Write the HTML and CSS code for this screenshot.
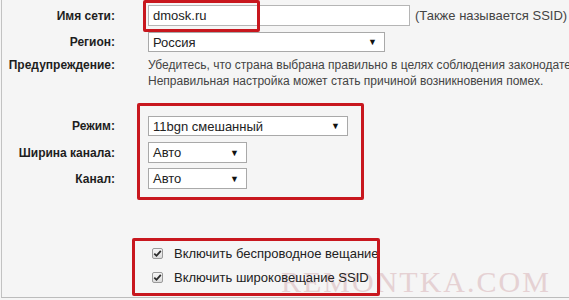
FILE: index.html
```
<!DOCTYPE html>
<html lang="ru">
<head>
<meta charset="utf-8">
<link rel="stylesheet" href="styles.css">
</head>
<body>
<div class="frame">
  <div class="watermark">REMONTKA.COM</div>

  <div class="row row-name">
    <div class="label">Имя сети:</div>
    <div class="ctrl">
      <div class="input">dmosk.ru</div>
      <span class="hint">(Также называется SSID)</span>
    </div>
  </div>

  <div class="row row-region">
    <div class="label">Регион:</div>
    <div class="ctrl">
      <div class="select w-region"><span>Россия</span><span class="arrow">▼</span></div>
    </div>
  </div>

  <div class="row row-warn">
    <div class="label">Предупреждение:</div>
    <div class="warn">Убедитесь, что страна выбрана правильно в целях соблюдения законодательства.<br>Неправильная настройка может стать причиной возникновения помех.</div>
  </div>

  <div class="row row-mode">
    <div class="label">Режим:</div>
    <div class="ctrl">
      <div class="select w-mode"><span>11bgn смешанный</span><span class="arrow">▼</span></div>
    </div>
  </div>

  <div class="row row-width">
    <div class="label">Ширина канала:</div>
    <div class="ctrl">
      <div class="select w-small"><span>Авто</span><span class="arrow">▼</span></div>
    </div>
  </div>

  <div class="row row-chan">
    <div class="label">Канал:</div>
    <div class="ctrl">
      <div class="select w-small"><span>Авто</span><span class="arrow">▼</span></div>
    </div>
  </div>

  <div class="checks">
    <label class="check"><span class="box"><svg viewBox="0 0 11 11" width="11" height="11"><path d="M2.3 5.6 L4.5 7.8 L8.8 2.9" fill="none" stroke="#2b2b2b" stroke-width="1.8"/></svg></span>Включить беспроводное вещание</label>
    <label class="check"><span class="box"><svg viewBox="0 0 11 11" width="11" height="11"><path d="M2.3 5.6 L4.5 7.8 L8.8 2.9" fill="none" stroke="#2b2b2b" stroke-width="1.8"/></svg></span>Включить широковещание SSID</label>
  </div>

  <div class="mark mark-name"></div>
  <div class="mark mark-mode"></div>
  <div class="mark mark-checks"></div>
</div>
</body>
</html>
```

FILE: styles.css
```
html, body {
  margin: 0;
  padding: 0;
  background: #f5f5f5;
  overflow: hidden;
}

body {
  font-family: "Liberation Sans", Arial, sans-serif;
  font-size: 13px;
  color: #333;
  width: 569px;
  height: 300px;
}

.frame {
  position: relative;
  box-sizing: border-box;
  height: 298px;
  margin-left: 1px;
  border-left: 1px solid #c2c2c2;
  border-bottom: 1px solid #bcbcbc;
  padding-top: 5px;
  overflow: hidden;
}

.row {
  display: grid;
  grid-template-columns: 113px auto;
  column-gap: 33px;
  align-items: center;
  white-space: nowrap;
  position: relative;
  z-index: 1;
}

.label {
  text-align: right;
  font-weight: bold;
  font-size: 12px;
  color: #1e1e1e;
}

.ctrl {
  display: flex;
  align-items: center;
}

.input {
  box-sizing: border-box;
  width: 262px;
  height: 21px;
  background: #fff;
  border: 1px solid #b5b5b5;
  padding: 0 4px;
  line-height: 19px;
  font-size: 13px;
  color: #222;
}

.hint {
  margin-left: 5px;
  color: #444;
}

.select {
  box-sizing: border-box;
  height: 20px;
  background: #fff;
  border: 1px solid #a9a9a9;
  display: flex;
  align-items: center;
  justify-content: space-between;
  padding: 0 7px 0 4px;
  color: #222;
  font-size: 13px;
}

.arrow {
  font-size: 9px;
  color: #111;
}

.w-region { width: 237px; }
.w-mode { width: 200px; }
.w-small { width: 99px; height: 21px; }

.row-region { margin-top: 6px; }

.row-warn {
  margin-top: 5px;
  align-items: start;
}

.row-warn .label { line-height: 16px; }

.warn {
  font-size: 12px;
  line-height: 16px;
  color: #444;
}

.row-mode { margin-top: 27px; }
.row-width { margin-top: 6px; }
.row-chan { margin-top: 5px; }

.checks {
  margin-top: 52px;
  padding-left: 150px;
  display: flex;
  flex-direction: column;
  position: relative;
  z-index: 1;
}

.check {
  display: flex;
  align-items: center;
  height: 24px;
  color: #222;
  white-space: nowrap;
}

.box {
  box-sizing: border-box;
  width: 11px;
  height: 11px;
  border: 1px solid #9a9a9a;
  border-radius: 2px;
  background: linear-gradient(#f6f6f6, #dcdcdc);
  margin-right: 11px;
  display: flex;
}

.box svg { display: block; margin: -1px; }

.watermark {
  position: absolute;
  left: 279px;
  top: 265px;
  font-family: "Liberation Serif", "Times New Roman", serif;
  font-size: 30px;
  letter-spacing: 2px;
  color: #e5d1d3;
  z-index: 0;
  white-space: nowrap;
}

.mark {
  position: absolute;
  border: 3px solid #c8171e;
  border-radius: 2px;
  z-index: 2;
  box-sizing: border-box;
}

.mark-name { left: 141px; top: 0; width: 117px; height: 32px; }
.mark-mode { left: 135px; top: 103px; width: 227px; height: 97px; }
.mark-checks { left: 130px; top: 238px; width: 248px; height: 58px; }
```
